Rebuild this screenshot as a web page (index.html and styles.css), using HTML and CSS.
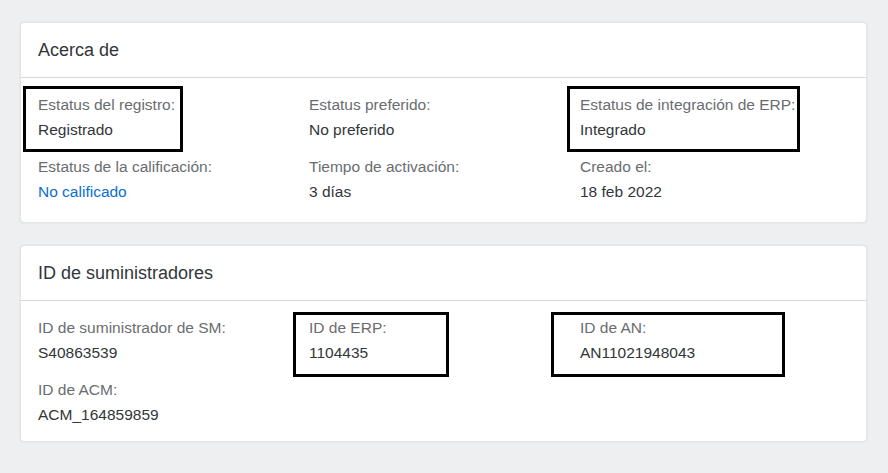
FILE: index.html
```html
<!doctype html>
<html lang="es">

<head>
  <meta charset="utf-8">
  <meta name="viewport" content="width=device-width, initial-scale=1">
  <title>Proveedor</title>
  <link rel="stylesheet" href="styles.css">
</head>

<body>
  <div class="page">

    <section class="card card_about">
      <div class="card__header">Acerca de</div>
      <div class="card__body">
        <div class="field">
          <div class="field__label">Estatus del registro:</div>
          <div class="field__value">Registrado</div>
        </div>
        <div class="field">
          <div class="field__label">Estatus preferido:</div>
          <div class="field__value">No preferido</div>
        </div>
        <div class="field">
          <div class="field__label">Estatus de integración de ERP:</div>
          <div class="field__value">Integrado</div>
        </div>
        <div class="field">
          <div class="field__label">Estatus de la calificación:</div>
          <div class="field__value"><a class="field__link" href="#">No calificado</a></div>
        </div>
        <div class="field">
          <div class="field__label">Tiempo de activación:</div>
          <div class="field__value">3 días</div>
        </div>
        <div class="field">
          <div class="field__label">Creado el:</div>
          <div class="field__value">18 feb 2022</div>
        </div>
      </div>
    </section>

    <section class="card card_ids">
      <div class="card__header">ID de suministradores</div>
      <div class="card__body">
        <div class="field">
          <div class="field__label">ID de suministrador de SM:</div>
          <div class="field__value">S40863539</div>
        </div>
        <div class="field">
          <div class="field__label">ID de ERP:</div>
          <div class="field__value">1104435</div>
        </div>
        <div class="field">
          <div class="field__label">ID de AN:</div>
          <div class="field__value">AN11021948043</div>
        </div>
        <div class="field">
          <div class="field__label">ID de ACM:</div>
          <div class="field__value">ACM_164859859</div>
        </div>
      </div>
    </section>

    <!-- marcas dibujadas encima de la captura -->
    <div class="mark mark_reg"></div>
    <div class="mark mark_erp-status"></div>
    <div class="mark mark_erp-id"></div>
    <div class="mark mark_an-id"></div>
  </div>
</body>

</html>
```

FILE: styles.css
```css
*,
*::before,
*::after {
  box-sizing: border-box;
}

html,
body {
  height: 100%;
}

body {
  margin: 0;
  font-family: "Liberation Sans", Arial, sans-serif;
  font-size: 15.5px;
  color: #32363a;
  background-color: #edeff0;
}

.page {
  position: relative;
  padding: 22px 21px 0 20px;
}

.card {
  background-color: #fff;
  border: 1px solid #e4e5e6;
  border-radius: 4px;
  box-shadow: 0 0 2px rgba(0, 0, 0, 0.1);
}

.card + .card {
  margin-top: 22px;
}

.card__header {
  padding: 17px 18px 16px 17px;
  font-size: 18px;
  line-height: 21px;
  border-bottom: 1px solid #d9d9d9;
}

.card__body {
  display: grid;
  grid-template-columns: repeat(3, 271px);
  row-gap: 19px;
  padding: 18px 14px 19px 17px;
}

.card_about .card__body {
  padding-bottom: 21px;
}

.card_ids .card__body {
  padding-bottom: 17px;
}

.field__label {
  line-height: 18px;
  color: #6a6d70;
}

.field__value {
  margin-top: 7px;
  line-height: 18px;
}

.field__link {
  color: #0a6ed1;
  text-decoration: none;
}

.mark {
  position: absolute;
  border: 3px solid #000;
}

.mark_reg {
  left: 23px;
  top: 86px;
  width: 160px;
  height: 66px;
}

.mark_erp-status {
  left: 567px;
  top: 86px;
  width: 233px;
  height: 66px;
}

.mark_erp-id {
  left: 293px;
  top: 312px;
  width: 156px;
  height: 65px;
}

.mark_an-id {
  left: 551px;
  top: 312px;
  width: 234px;
  height: 65px;
}
```
